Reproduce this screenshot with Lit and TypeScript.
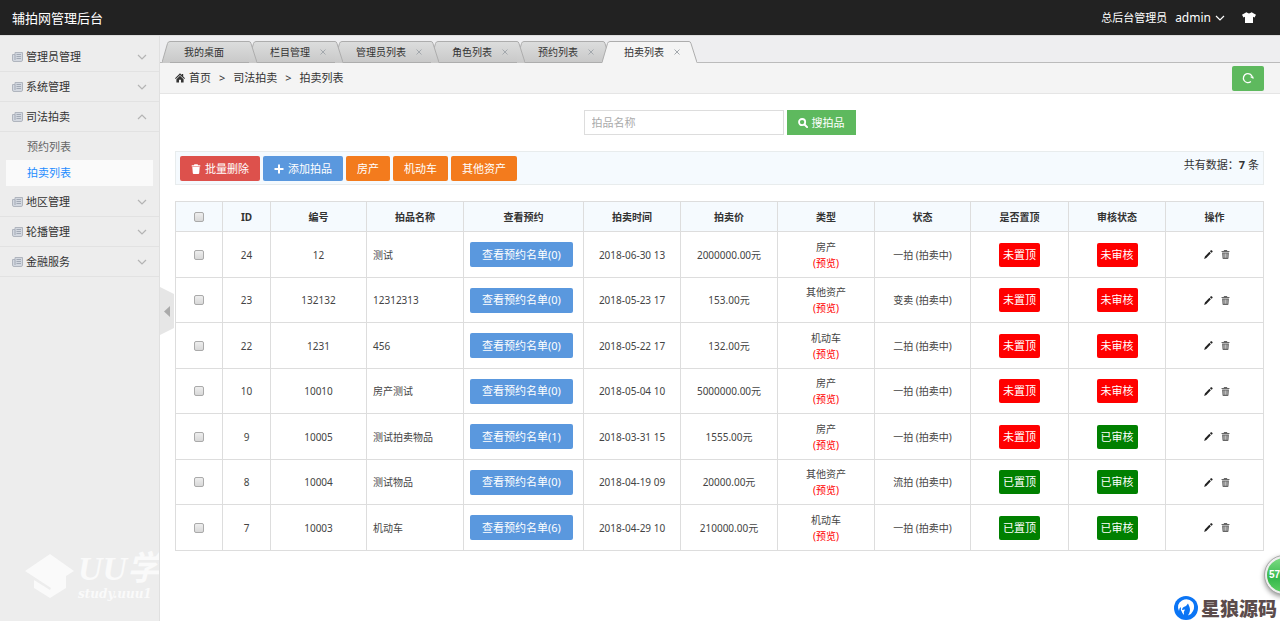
import { LitElement, html, css, svg, nothing } from "lit";
import { customElement, state } from "lit/decorators.js";
import { classMap } from "lit/directives/class-map.js";

interface MenuGroup {
  name: string;
  children?: string[];
}

interface Auction {
  id: number;
  code: string;
  name: string;
  bookings: number;
  time: string;
  price: string;
  type: string;
  stage: string;
  pinned: boolean;
  approved: boolean;
}

const MENU: MenuGroup[] = [
  { name: "管理员管理" },
  { name: "系统管理" },
  { name: "司法拍卖", children: ["预约列表", "拍卖列表"] },
  { name: "地区管理" },
  { name: "轮播管理" },
  { name: "金融服务" },
];

const TABS = ["我的桌面", "栏目管理", "管理员列表", "角色列表", "预约列表", "拍卖列表"];

const COLUMNS = [
  { title: "ID", cls: "c48" },
  { title: "编号", cls: "c96" },
  { title: "拍品名称", cls: "c97" },
  { title: "查看预约", cls: "c120" },
  { title: "拍卖时间", cls: "c97" },
  { title: "拍卖价", cls: "c97" },
  { title: "类型", cls: "c97" },
  { title: "状态", cls: "c96" },
  { title: "是否置顶", cls: "c98" },
  { title: "审核状态", cls: "c97" },
  { title: "操作", cls: "c98" },
];

const ROWS: Auction[] = [
  { id: 24, code: "12", name: "测试", bookings: 0, time: "2018-06-30 13", price: "2000000.00元", type: "房产", stage: "一拍", pinned: false, approved: false },
  { id: 23, code: "132132", name: "12312313", bookings: 0, time: "2018-05-23 17", price: "153.00元", type: "其他资产", stage: "变卖", pinned: false, approved: false },
  { id: 22, code: "1231", name: "456", bookings: 0, time: "2018-05-22 17", price: "132.00元", type: "机动车", stage: "二拍", pinned: false, approved: false },
  { id: 10, code: "10010", name: "房产测试", bookings: 0, time: "2018-05-04 10", price: "5000000.00元", type: "房产", stage: "一拍", pinned: false, approved: false },
  { id: 9, code: "10005", name: "测试拍卖物品", bookings: 1, time: "2018-03-31 15", price: "1555.00元", type: "房产", stage: "一拍", pinned: false, approved: true },
  { id: 8, code: "10004", name: "测试物品", bookings: 0, time: "2018-04-19 09", price: "20000.00元", type: "其他资产", stage: "流拍", pinned: true, approved: true },
  { id: 7, code: "10003", name: "机动车", bookings: 6, time: "2018-04-29 10", price: "210000.00元", type: "机动车", stage: "一拍", pinned: true, approved: true },
];

const trash = html`<svg class="trash" viewBox="0 0 10 10" aria-hidden="true">
  <path fill="currentColor" d="M3.400.2h3.200l.5 1H9.300v1.300H.7V1.200h2.200zM1.300 3h7.400l-.5 6.200q-.1.800-.9.800H2.700q-.8 0-.9-.8z"/>
</svg>`;
const trashOutline = html`<svg class="trash" viewBox="0 0 10 10" aria-hidden="true">
  <path fill="currentColor" fill-rule="evenodd" d="M3.400 0h3.200l.5 1H9.400v1.200H.6V1h2.300zM1.200 2.800h7.600l-.5 6.400q-.1.800-.9.800H2.600q-.8 0-.9-.8zM3 4v4.600h.7V4zm1.700 0v4.600h.6V4zm1.600 0v4.600H7V4z"/>
</svg>`;
const pencil = html`<svg class="pencil" viewBox="0 0 10 10" aria-hidden="true">
  <path fill="currentColor" d="M.2 9.900l.8-2.600 5-5.300 1.600 1.600-5 5.300zM6.600 1.400l1-1q.5-.4 1 0l.8.7q.4.500 0 1l-1.100 1z"/>
</svg>`;
const plus = html`<svg class="icon10" viewBox="0 0 10 10" aria-hidden="true"><path fill="currentColor" d="M4 .5h2V4h3.500v2H6v3.500H4V6H.5V4H4z"/></svg>`;
const search = html`<svg class="icon10" viewBox="0 0 10 10" aria-hidden="true"><circle cx="4.100" cy="4.100" r="3.100" fill="none" stroke="currentColor" stroke-width="1.800"/><path d="M6.500 6.500L9.100 9.100" stroke="currentColor" stroke-width="2" stroke-linecap="round"/></svg>`;
const refresh = html`<svg class="icon12" viewBox="0 0 12 12" aria-hidden="true"><path d="M8.900 9.500A4.500 4.500 0 1 1 10.300 5.200" fill="none" stroke="currentColor" stroke-width="1.300"/><path d="M7.800 4.800h3.700V7z" fill="currentColor"/></svg>`;
const home = html`<svg class="icon10" viewBox="0 0 10 10" aria-hidden="true"><path fill="currentColor" d="M5 .3L6.800 2V1h1.400v2.400L10 5.200l-.7.800L5 2 .7 6 0 5.200zM5 2.800l3.600 3.400v3.300H6V6.800H4v2.700H1.400V6.200z"/></svg>`;
const shirt = html`<svg class="shirt" viewBox="0 0 14 11" aria-hidden="true"><path fill="currentColor" d="M4.400.3Q7 2.600 9.600.3L14 2.700 12.500 5.400 11 4.700V11H3V4.700L1.500 5.400 0 2.700z"/></svg>`;
const news = html`<svg class="news" viewBox="0 0 11 10" aria-hidden="true"><path d="M3 .5h7.500v7.600q0 1.400-1.400 1.400H2Q.5 9.500.5 8V2.500H3z" fill="#d3d8e0" stroke="#b0b5be"/><path d="M3 2.500V8M4.500 2.500h4.500M4.500 4.500h4.500M4.500 6.500h4.500" stroke="#a2a9b5" fill="none"/></svg>`;
const cross = html`<svg class="cross" viewBox="0 0 6 6" aria-hidden="true"><path d="M.5.5l5 5M5.500.5l-5 5" stroke="currentColor"/></svg>`;

const chevron = (up: boolean, cls = "chev") => html`<svg class=${cls} viewBox="0 0 10 6" aria-hidden="true">
  <path d=${up ? "M1 5l4-4 4 4" : "M1 1l4 4 4-4"} fill="none" stroke="currentColor" stroke-width="1.200"/>
</svg>`;

const tabFill = svg`<defs>
  <linearGradient id="shade" x1="0" y1="0" x2="0" y2="1">
    <stop offset="0" stop-color="#dcdddd"/><stop offset="1" stop-color="#c9c9c9"/>
  </linearGradient></defs>`;

@customElement("app-root")
export class AppRoot extends LitElement {
  @state() private activeTab = 5;
  @state() private open = "司法拍卖";

  static styles = css`
    :host {
      display: flex;
      flex-direction: column;
      min-height: 100vh;
      position: relative;
      overflow: hidden;
      background: #fff;
      color: #333;
      font: 11px/16px "Noto Sans", "Noto Sans CJK SC", sans-serif;
    }
    * { box-sizing: border-box; }
    a { color: inherit; text-decoration: none; }
    button, input { font: inherit; color: inherit; margin: 0; }
    button { border: 0; background: none; padding: 0; cursor: pointer; }
    svg { display: block; flex: none; }
    ul { list-style: none; margin: 0; padding: 0; }
    .icon10 { width: 10px; height: 10px; }
    .icon12 { width: 12px; height: 12px; }

    .top {
      height: 35px;
      flex: none;
      display: flex;
      align-items: center;
      padding: 0 24px 0 12px;
      background: #222;
      color: #fff;
    }
    .brand { font-size: 13px; font-weight: 400; margin: 0 auto 0 0; line-height: 20px; }
    .user { display: flex; align-items: center; gap: 4px; margin-left: 8px; font-size: 12px; }
    .caret { width: 10px; height: 6px; }
    .skin { margin-left: 17px; }
    .shirt { width: 14px; height: 11px; }

    .body { flex: 1; display: flex; border-top: 1px solid #ddd; }
    .side {
      width: 160px;
      flex: none;
      display: flex;
      flex-direction: column;
      position: relative;
      padding-top: 6px;
      background: #ededed;
      border-right: 1px solid #e0e0e0;
    }
    .group {
      width: 100%;
      height: 30px;
      display: flex;
      align-items: center;
      gap: 3px;
      padding: 0 12px;
      border-bottom: 1px solid #e2e2e2;
      text-align: left;
    }
    .group span { flex: 1; }
    .news { width: 11px; height: 10px; }
    .chev { width: 10px; height: 6px; color: #b4b4b4; }
    .sub { padding: 2px 6px 1px; color: #666; }
    .sub a { display: block; height: 26px; line-height: 26px; padding-left: 21px; }
    .sub .on { background: #fafafa; color: #1e8cff; }
    .mark {
      margin-top: auto;
      height: 74px;
      overflow: hidden;
      white-space: nowrap;
      display: flex;
      gap: 4px;
      padding-left: 25px;
      color: #fafafa;
    }
    .cap { width: 49px; height: 48px; margin-top: 6px; }
    .mark-text { font: italic bold 34px/40px "Liberation Serif", "Noto Sans CJK SC", serif; margin-top: 2px; }
    .mark-text small { display: block; font: italic bold 12px/10px "DejaVu Serif", serif; }
    .fold { position: absolute; left: 160px; top: 251px; z-index: 2; }
    .fold svg { width: 14px; height: 48px; }

    .main { flex: 1; min-width: 0; display: flex; flex-direction: column; }
    .tabs {
      display: flex;
      height: 27px;
      flex: none;
      padding: 5px 0 0 2px;
      background: #eeeef0;
      box-shadow: inset 0 -1px #bbb;
      font-size: 10px;
    }
    .tab { display: flex; height: 22px; margin-right: -9px; position: relative; }
    .tab:nth-child(1) { z-index: 6; }
    .tab:nth-child(2) { z-index: 5; }
    .tab:nth-child(3) { z-index: 4; }
    .tab:nth-child(4) { z-index: 3; }
    .tab:nth-child(5) { z-index: 2; }
    .tab.on { z-index: 7; }
    .edge { width: 8px; height: 22px; }
    .edge .face { fill: url(#shade); }
    .edge .line { fill: none; stroke: #adadad; }
    .tab.on .edge .face { fill: #f4f4f4; }
    .face-mid {
      display: flex;
      align-items: center;
      gap: 10px;
      padding: 0 9px 0 14px;
      border-top: 1px solid #adadad;
      border-bottom: 1px solid #adadad;
      background: linear-gradient(#dcdddd, #c9c9c9);
    }
    .tab.on .face-mid { background: #f4f4f4; border-bottom-color: #f4f4f4; }
    .tab:first-child .face-mid { padding-right: 25px; }
    .cross { width: 6px; height: 6px; color: #a3a8ad; }

    .crumbs {
      display: flex;
      align-items: center;
      gap: 8px;
      height: 31px;
      flex: none;
      padding: 0 16px 0 15px;
      background: #f4f4f4;
      border-bottom: 1px solid #e5e5e5;
    }
    .crumbs .home { display: flex; align-items: center; gap: 4px; }
    .reload {
      margin-left: auto;
      width: 32px;
      height: 25px;
      display: grid;
      place-items: center;
      border-radius: 2px;
      background: #5eb95e;
      color: #fff;
    }

    .page { display: flex; flex-direction: column; gap: 16px; padding: 16px 16px 16px 15px; }
    .find { display: flex; justify-content: center; gap: 3px; }
    .find input {
      width: 200px;
      height: 25px;
      padding: 0 7px;
      border: 1px solid #ddd;
      background: #fff;
      outline: none;
    }
    .find input::placeholder { color: #aaa; opacity: 1; }
    .btn {
      height: 25px;
      display: flex;
      align-items: center;
      gap: 4px;
      padding: 0 11px;
      border-radius: 2px;
      color: #fff;
      white-space: nowrap;
    }
    .find .btn { border-radius: 0; }
    .green { background: #5eb95e; }
    .red { background: #dd514c; }
    .blue { background: #5a98de; }
    .orange { background: #f37b1d; }
    .bar {
      display: flex;
      gap: 3px;
      padding: 4px 4px 3px;
      background: #f5fafe;
      border: 1px solid #e8eced;
    }
    .total { margin: 1px 0 0 auto; }
    .trash { width: 10px; height: 10px; }

    table {
      width: 100%;
      table-layout: fixed;
      border-collapse: collapse;
      font-size: 10px;
      text-align: center;
    }
    th, td { border: 1px solid #ddd; padding: 0 6px; }
    th { background: #f5fafe; font-weight: 700; }
    thead tr { height: 30px; }
    tbody tr { height: 46px; }
    tbody tr:nth-child(even) { height: 45px; }
    .c47 { width: 47px; }
    .c48 { width: 48px; }
    .c96 { width: 96px; }
    .c97 { width: 97px; }
    .c98 { width: 98px; }
    .c120 { width: 120px; }
    td { color: #444; }
    .left { text-align: left; }
    .box {
      appearance: none;
      display: block;
      width: 10px;
      height: 10px;
      margin: 0 auto;
      border: 1px solid #aaa;
      border-radius: 2px;
      background: linear-gradient(#eee, #d8d8d8);
    }
    .box:checked { background: #5a98de; }
    td .btn { font-size: 11px; padding: 0 12px; }
    .preview { display: block; color: #f00; }
    .badge {
      display: inline-block;
      padding: 4px;
      border-radius: 2px;
      background: #f00;
      color: #fff;
      font-size: 11px;
      vertical-align: middle;
    }
    .badge.yes { background: #008000; }
    .ops { display: flex; justify-content: center; gap: 8px; padding-left: 4px; }
    .pencil { width: 9px; height: 9px; color: #222; }
    .ops .trash { width: 9px; height: 9px; color: #666; }

    .site {
      position: absolute;
      right: 3px;
      bottom: 0;
      display: flex;
      align-items: center;
      gap: 3px;
      color: #5b4b4b;
      font: 900 19px/26px "Noto Sans CJK SC", sans-serif;
    }
    .wolf { width: 24px; height: 24px; }
    .ball {
      position: absolute;
      right: -23px;
      bottom: 27px;
      width: 38px;
      height: 38px;
      padding-left: 2px;
      border: 2px solid #eee;
      border-radius: 50%;
      outline: 1px solid #aaa;
      background: linear-gradient(#7ddb84, #35b84b 60%, #5ccf63);
      box-shadow: 0 2px 5px 1px #999;
      color: #fff;
      font: bold 10px/34px "Liberation Sans", sans-serif;
      text-align: left;
    }
  `;

  private renderTab(name: string, i: number) {
    return html`<li class=${classMap({ tab: true, on: i === this.activeTab })}>
      <svg class="edge" viewBox="0 0 8 22" aria-hidden="true">${tabFill}
        <path class="face" d="M0 22L5.500 2.500Q6 .5 8 .5V22z"/><path class="line" d="M0 21.500L5.500 2.500Q6 .5 8 .5"/>
      </svg>
      <div class="face-mid">
        <a href="#" @click=${(e: Event) => { e.preventDefault(); this.activeTab = i; }}>${name}</a>
        ${i ? html`<button aria-label="关闭${name}">${cross}</button>` : nothing}
      </div>
      <svg class="edge" viewBox="0 0 8 22" aria-hidden="true">${tabFill}
        <path class="face" d="M0 .5Q1.500.5 2 2.500L8 22H0z"/><path class="line" d="M0 .5Q1.500.5 2 2.500L8 21.500"/>
      </svg>
    </li>`;
  }

  private renderGroup(g: MenuGroup) {
    const open = this.open === g.name;
    return html`<button class="group" aria-expanded=${open} @click=${() => (this.open = open ? "" : g.name)}>
        ${news}<span>${g.name}</span>${chevron(open)}
      </button>
      ${open && g.children
        ? html`<ul class="sub">${g.children.map((c) => html`<li><a href="#" class=${c === "拍卖列表" ? "on" : ""}>${c}</a></li>`)}</ul>`
        : nothing}`;
  }

  private renderRow(r: Auction) {
    return html`<tr>
      <td><input class="box" type="checkbox" aria-label="选择 ${r.id}"></td>
      <td>${r.id}</td>
      <td>${r.code}</td>
      <td class="left">${r.name}</td>
      <td><button class="btn blue">查看预约名单(${r.bookings})</button></td>
      <td>${r.time}</td>
      <td>${r.price}</td>
      <td>${r.type}<a class="preview" href="#">(预览)</a></td>
      <td>${r.stage} (拍卖中)</td>
      <td><span class=${classMap({ badge: true, yes: r.pinned })}>${r.pinned ? "已置顶" : "未置顶"}</span></td>
      <td><span class=${classMap({ badge: true, yes: r.approved })}>${r.approved ? "已审核" : "未审核"}</span></td>
      <td><div class="ops"><button aria-label="编辑">${pencil}</button><button aria-label="删除">${trashOutline}</button></div></td>
    </tr>`;
  }

  render() {
    return html`
      <header class="top">
        <h1 class="brand">辅拍网管理后台</h1>
        <span>总后台管理员</span>
        <button class="user">admin ${chevron(false, "caret")}</button>
        <button class="skin" aria-label="换肤">${shirt}</button>
      </header>
      <div class="body">
        <nav class="side">
          ${MENU.map((g) => this.renderGroup(g))}
          <div class="mark" aria-hidden="true">
            <svg class="cap" viewBox="0 0 49 48"><path fill="currentColor" d="M25 1L49 18 41 23V35L25 45 9 35V27L25 37 26 35 0 18z"/></svg>
            <div class="mark-text">UU学<small>study.uuu1</small></div>
          </div>
          <button class="fold" aria-label="收起菜单">
            <svg viewBox="0 0 14 48"><path fill="#e6e6e6" d="M0 0L14 7V41L0 48z"/><path fill="#aaa" d="M4 24.500L10 19V30z"/></svg>
          </button>
        </nav>
        <div class="main">
          <ul class="tabs">${TABS.map((t, i) => this.renderTab(t, i))}</ul>
          <nav class="crumbs">
            <a class="home" href="#">${home}首页</a><span>&gt;</span><span>司法拍卖</span><span>&gt;</span><span>拍卖列表</span>
            <button class="reload" aria-label="刷新">${refresh}</button>
          </nav>
          <main class="page">
            <form class="find" @submit=${(e: Event) => e.preventDefault()}>
              <input type="text" placeholder="拍品名称" aria-label="拍品名称">
              <button class="btn green">${search}搜拍品</button>
            </form>
            <div class="bar">
              <button class="btn red">${trash}批量删除</button>
              <button class="btn blue">${plus}添加拍品</button>
              <button class="btn orange">房产</button>
              <button class="btn orange">机动车</button>
              <button class="btn orange">其他资产</button>
              <p class="total">共有数据：<strong>7</strong> 条</p>
            </div>
            <table>
              <thead><tr>
                <th class="c47"><input class="box" type="checkbox" aria-label="全选"></th>
                ${COLUMNS.map((c) => html`<th class=${c.cls}>${c.title}</th>`)}
              </tr></thead>
              <tbody>${ROWS.map((r) => this.renderRow(r))}</tbody>
            </table>
          </main>
        </div>
      </div>
      <div class="site">
        <svg class="wolf" viewBox="0 0 24 24" aria-hidden="true"><circle cx="12" cy="12" r="12" fill="#0b75f5"/><path fill="#fff" d="M5 15Q2 8 8 4.500 14 1.500 18.500 6 21.500 10 19 15 17.500 18.500 14 19.500 17 15 15.500 11L14 7.500 12 10Q8 11 8 14L11 13.500Q9 16 10 19 8 17 7.500 15 6.500 14 7 11 5 12 5 15z"/></svg>
        <span>星狼源码</span>
      </div>
      <button class="ball">57</button>
    `;
  }
}
